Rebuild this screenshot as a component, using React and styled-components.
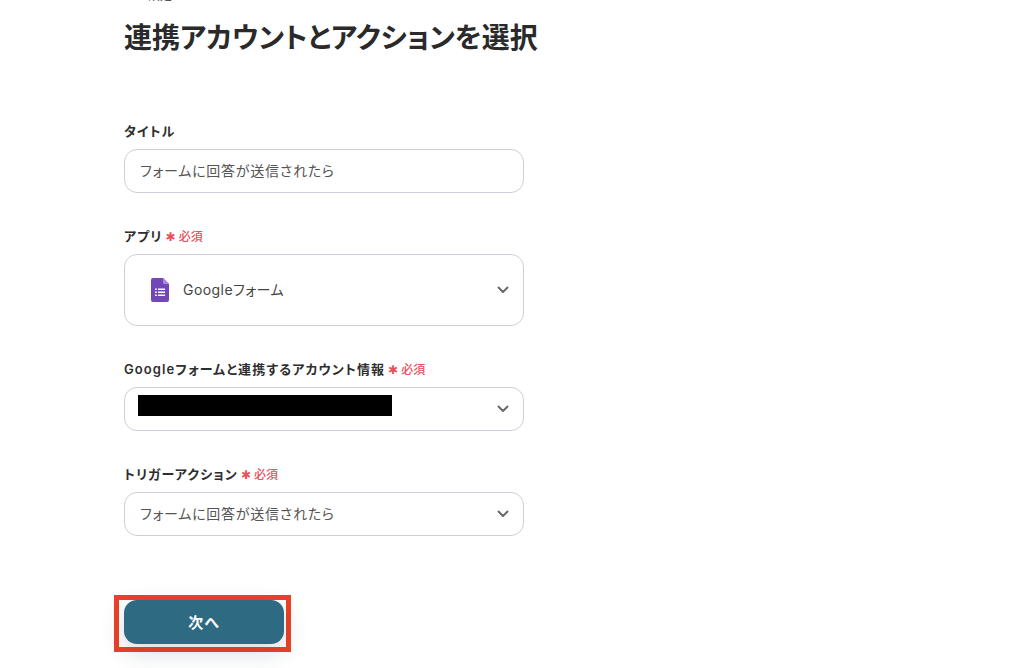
import React from "react";
import styled, { createGlobalStyle } from "styled-components";

const Global = createGlobalStyle`
  html, body { margin: 0; padding: 0; background: #fff; overflow: hidden; height: 668px; }
  * { box-sizing: border-box; }
  body {
    font-family: Inter, "Noto Sans CJK JP", sans-serif;
    font-feature-settings: "palt";
    color: #2b2b2b;
  }
`;

const Page = styled.main`
  width: 1030px;
  height: 668px;
  overflow: hidden;
  padding-left: 124px;
`;

const Crumb = styled.div`
  height: 14px;
  margin-top: -11px;
  padding-left: 24px;
  font-size: 12px;
  line-height: 14px;
  color: #555;
  font-weight: 500;
`;

const Heading = styled.h1`
  margin: 15px 0 0;
  font-size: 28px;
  line-height: 40px;
  font-weight: 600;
  color: #2a2a2a;
  white-space: nowrap;
`;

const Form = styled.form`
  width: 400px;
  margin-top: 63px;
  display: flex;
  flex-direction: column;
`;

const Field = styled.div`
  display: flex;
  flex-direction: column;
  gap: 8px;
  margin-bottom: 33px;
`;

const Label = styled.div`
  display: flex;
  align-items: center;
  height: 20px;
  font-size: 13px;
  line-height: 20px;
  font-weight: 600;
  letter-spacing: 1.1px;
  color: #2e2e2e;
  white-space: nowrap;
`;

const Required = styled.span`
  display: inline-flex;
  align-items: center;
  gap: 3px;
  margin: 2px 0 0 3px;
  font-size: 12px;
  font-weight: 500;
  letter-spacing: 0;
  color: #e8505b;
`;

const Star = styled.span`
  font-family: "DejaVu Sans", sans-serif;
  font-size: 12px;
`;

const Box = styled.div`
  position: relative;
  display: flex;
  align-items: center;
  height: ${(p) => (p.$tall ? "72px" : "44px")};
  padding: 0 14px 2px 15px;
  border: 1px solid #ccd0da;
  border-radius: 13px;
  background: #fff;
  font-size: 14px;
  color: #555;
  letter-spacing: 0.75px;
`;

const AppName = styled.span`
  margin-left: 14px;
  font-size: 14px;
  color: #444;
  letter-spacing: 0.45px;
`;

const AppIconWrap = styled.span`
  display: flex;
  margin: 2px 0 0 11px;
`;

const Chevron = styled.svg`
  position: absolute;
  right: 13px;
  top: 50%;
  transform: translateY(-50%);
  width: 14px;
  height: 9px;
`;

const Redaction = styled.span`
  display: block;
  width: 254px;
  height: 21px;
  margin: -6px 0 0 -2px;
  background: #000;
`;

const Actions = styled.div`
  margin-top: 26px;
`;

const Highlight = styled.div`
  width: 177px;
  height: 57px;
  margin-left: -10px;
  padding: 0 0 0 5px;
  border: 5px solid #ec4126;
`;

const NextButton = styled.button`
  display: block;
  width: 160px;
  height: 44px;
  padding: 0 0 2px;
  border: 0;
  border-radius: 13px;
  background: #2e6a82;
  color: #fff;
  font-family: inherit;
  font-feature-settings: "palt";
  font-size: 15px;
  font-weight: 600;
  letter-spacing: 1px;
  box-shadow: 0 8px 24px rgba(40, 60, 80, 0.18);
`;

const FormsIcon = () => (
  <svg width="18" height="24" viewBox="0 0 18 24" aria-hidden="true">
    <path d="M2 0h10l6 6v16a2 2 0 0 1-2 2H2a2 2 0 0 1-2-2V2a2 2 0 0 1 2-2z" fill="#7248b9" />
    <path d="M12 0l6 6h-4.500A1.500 1.500 0 0 1 12 4.500z" fill="#a98bd8" />
    <g fill="#fff">
      <rect x="4" y="10.500" width="1.800" height="1.500" />
      <rect x="7" y="10.500" width="7" height="1.500" />
      <rect x="4" y="13.500" width="1.800" height="1.500" />
      <rect x="7" y="13.500" width="7" height="1.500" />
      <rect x="4" y="16.500" width="1.800" height="1.500" />
      <rect x="7" y="16.500" width="7" height="1.500" />
    </g>
  </svg>
);

const Arrow = () => (
  <Chevron viewBox="0 0 14 9" aria-hidden="true">
    <path d="M2.500 2l4.500 4.500L11.500 2" fill="none" stroke="#6b6b6b" strokeWidth="2" strokeLinecap="round" strokeLinejoin="round" />
  </Chevron>
);

const Req = () => (
  <Required>
    <Star>✱</Star>
    <span>必須</span>
  </Required>
);

export default function App() {
  return (
    <Page>
      <Global />
      <Crumb>設定</Crumb>
      <Heading>連携アカウントとアクションを選択</Heading>
      <Form>
        <Field>
          <Label>タイトル</Label>
          <Box>フォームに回答が送信されたら</Box>
        </Field>
        <Field>
          <Label>アプリ<Req /></Label>
          <Box $tall>
            <AppIconWrap><FormsIcon /></AppIconWrap>
            <AppName>Googleフォーム</AppName>
            <Arrow />
          </Box>
        </Field>
        <Field>
          <Label>Googleフォームと連携するアカウント情報<Req /></Label>
          <Box>
            <Redaction />
            <Arrow />
          </Box>
        </Field>
        <Field>
          <Label>トリガーアクション<Req /></Label>
          <Box>
            フォームに回答が送信されたら
            <Arrow />
          </Box>
        </Field>
      </Form>
      <Actions>
        <Highlight>
          <NextButton type="button">次へ</NextButton>
        </Highlight>
      </Actions>
    </Page>
  );
}
